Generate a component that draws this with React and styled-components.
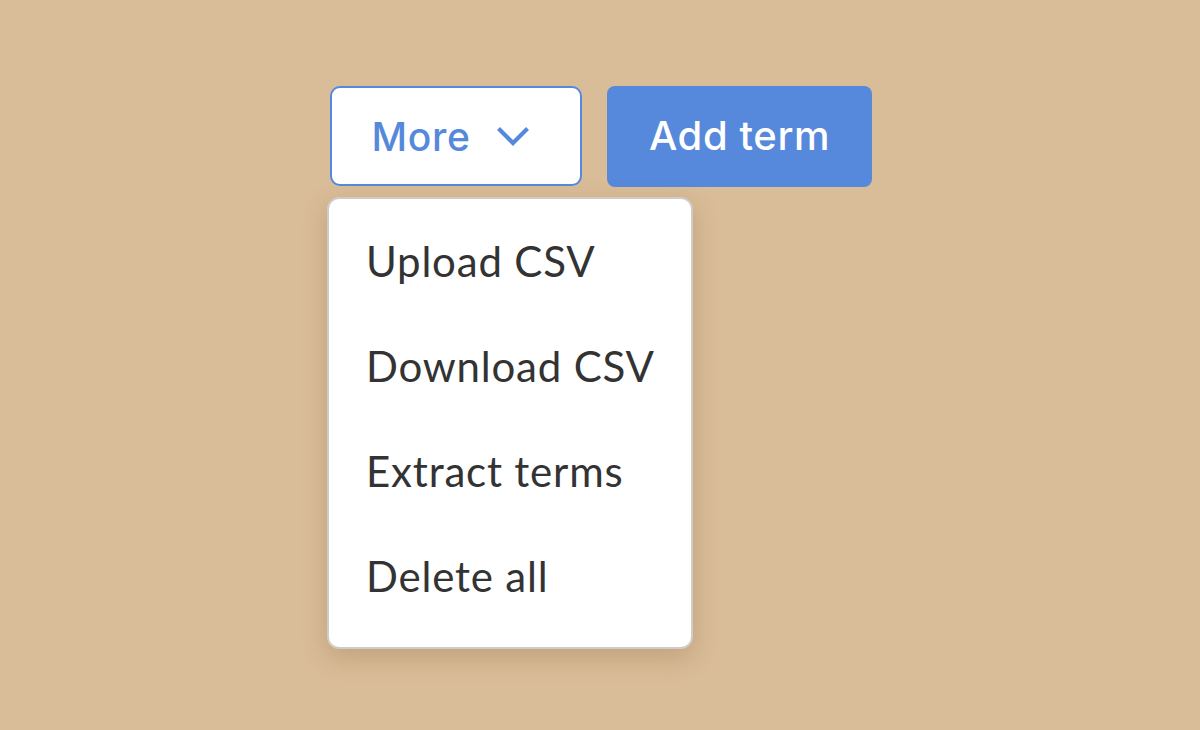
import React from "react";
import styled, { createGlobalStyle } from "styled-components";

const Global = createGlobalStyle`
  html, body { margin: 0; padding: 0; }
  body {
    background: #d9bc98;
    font-family: Lato, "Liberation Sans", sans-serif;
    width: 1200px;
    height: 730px;
    overflow: hidden;
  }
`;

const Page = styled.div`
  display: flex;
  justify-content: center;
  padding-top: 86px;
  padding-left: 2px;
`;

const Toolbar = styled.div`
  display: flex;
  gap: 25px;
`;

const DropdownWrap = styled.div`
  position: relative;
`;

const MoreButton = styled.button`
  box-sizing: border-box;
  width: 252px;
  height: 100px;
  display: flex;
  align-items: center;
  justify-content: center;
  gap: 26px;
  padding: 0 10px 0 0;
  background: #ffffff;
  border: 2px solid #5689db;
  border-radius: 10px;
  color: #5689db;
  font-family: Inter, "Liberation Sans", sans-serif;
  font-weight: 500;
  font-size: 39px;
  letter-spacing: 0.6px;
  cursor: pointer;
`;

const PrimaryButton = styled.button`
  box-sizing: border-box;
  width: 265px;
  height: 101px;
  padding: 0 0 2px 0;
  border: none;
  border-radius: 8px;
  background: #5689db;
  color: #ffffff;
  font-family: Inter, "Liberation Sans", sans-serif;
  font-weight: 500;
  font-size: 40px;
  letter-spacing: 0.6px;
  cursor: pointer;
`;

const Menu = styled.ul`
  position: absolute;
  top: 111px;
  left: -3px;
  box-sizing: border-box;
  width: 366px;
  margin: 0;
  padding: 9px 0 19px;
  list-style: none;
  background: #ffffff;
  border: 2px solid #cfcbc6;
  border-radius: 12px;
  box-shadow: 0 8px 24px rgba(120, 85, 40, 0.25);
`;

const MenuItem = styled.li`
  height: 105px;
  display: flex;
  align-items: center;
  padding-left: 37px;
  color: #333333;
  font-size: 42px;
  letter-spacing: 0.8px;
  cursor: pointer;
`;

const Chevron = () => (
  <svg width="34" height="22" viewBox="0 0 34 22" fill="none">
    <path d="M2.5 3.5 L17 18 L31.5 3.5" stroke="#5689db" strokeWidth="4.2" strokeLinecap="butt" strokeLinejoin="miter" />
  </svg>
);

export default function App() {
  const items = ["Upload CSV", "Download CSV", "Extract terms", "Delete all"];
  return (
    <>
      <Global />
      <Page>
        <Toolbar>
          <DropdownWrap>
            <MoreButton>
              More
              <Chevron />
            </MoreButton>
            <Menu>
              {items.map((t) => (
                <MenuItem key={t}>{t}</MenuItem>
              ))}
            </Menu>
          </DropdownWrap>
          <PrimaryButton>Add term</PrimaryButton>
        </Toolbar>
      </Page>
    </>
  );
}
